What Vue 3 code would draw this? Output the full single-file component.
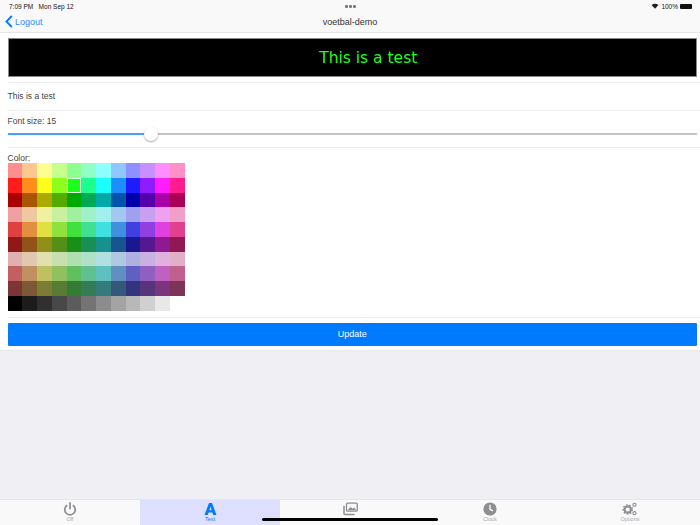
<script setup>
import { ref } from 'vue'

// hue order: [r, g, b] picks from max / min / mid of each tone row
const hues = [
  ['max', 'min', 'min'], ['max', 'mid', 'min'], ['max', 'max', 'min'], ['mid', 'max', 'min'],
  ['min', 'max', 'min'], ['min', 'max', 'mid'], ['min', 'max', 'max'], ['min', 'mid', 'max'],
  ['min', 'min', 'max'], ['mid', 'min', 'max'], ['max', 'min', 'max'], ['max', 'min', 'mid']
]
const tones = [
  [255, 143], [255, 28], [170, 0],
  [240, 160], [224, 64], [144, 24],
  [224, 176], [192, 96], [124, 52]
]
const grays = [0, 28, 48, 72, 92, 116, 140, 164, 184, 208, 232]

const colors = []
for (const [max, min] of tones) {
  const mid = Math.round((max + min) / 2)
  const v = { max, min, mid }
  for (const h of hues) {
    colors.push(`rgb(${v[h[0]]},${v[h[1]]},${v[h[2]]})`)
  }
}
for (const g of grays) colors.push(`rgb(${g},${g},${g})`)

const selected = ref(16)
const tabs = [
  { label: 'Off', icon: 'power' },
  { label: 'Text', icon: 'text' },
  { label: '', icon: 'images' },
  { label: 'Clock', icon: 'clock' },
  { label: 'Options', icon: 'gears' }
]
</script>

<template>
  <div class="screen">
    <header class="top">
      <div class="status">
        <span class="time">7:09 PM&nbsp;&nbsp; Mon Sep 12</span>
        <span class="dots"><i></i><i></i><i></i></span>
        <span class="right">
          <svg width="8" height="6" viewBox="0 0 10 8"><path d="M5 7.6 L0.4 2.6 C3 0.3 7 0.3 9.6 2.6 Z" fill="#222"/></svg>
          100%
          <span class="battery"></span>
        </span>
      </div>
      <div class="nav">
        <a class="back">
          <svg width="8" height="13" viewBox="0 0 8 13"><path d="M6.8 1 L1.4 6.5 L6.8 12" fill="none" stroke="#007aff" stroke-width="1.8"/></svg>
          Logout
        </a>
        <span class="title">voetbal-demo</span>
      </div>
    </header>

    <main class="content">
      <div class="preview-row">
        <div class="preview">This is a test</div>
      </div>
      <div class="row text-row">This is a test</div>
      <div class="row slider-row">
        <div class="label">Font size: 15</div>
        <div class="slider">
          <div class="fill"></div>
          <div class="thumb"></div>
        </div>
      </div>
      <div class="row color-row">
        <div class="label color-label">Color:</div>
        <div class="palette">
          <div
            v-for="(c, i) in colors"
            :key="i"
            class="swatch"
            :class="{ on: i === selected }"
            :style="{ background: c }"
          ></div>
        </div>
      </div>
      <div class="button-row">
        <button class="update">Update</button>
      </div>
    </main>

    <div class="spacer"></div>

    <nav class="tabs">
      <div v-for="t in tabs" :key="t.icon" class="tab" :class="{ active: t.icon === 'text' }">
        <svg v-if="t.icon === 'power'" width="14" height="14" viewBox="0 0 14 15">
          <path d="M4 3.4 A5.6 5.6 0 1 0 10 3.4" fill="none" stroke="#8e8e93" stroke-width="1.9"/>
          <path d="M7 1 V7" stroke="#8e8e93" stroke-width="1.9" stroke-linecap="round"/>
        </svg>
        <svg v-else-if="t.icon === 'text'" width="13" height="14" viewBox="0 0 13 14">
          <path d="M0.5 13 H3.8 L4.6 10.6 H8.4 L9.2 13 H12.5 L8 1 H5 Z M5.4 8.2 L6.5 4.6 L7.6 8.2 Z" fill="#007aff" fill-rule="evenodd"/>
        </svg>
        <svg v-else-if="t.icon === 'images'" width="15" height="14" viewBox="0 0 15 13">
          <rect x="3.5" y="0.7" width="10.8" height="8" rx="1" fill="none" stroke="#8e8e93" stroke-width="1.3"/>
          <path d="M4.5 7.8 L7.5 4.5 L9.5 6.3 L11 5 L13.5 7.8 Z" fill="#8e8e93"/>
          <path d="M1 3.2 V11 Q1 12 2 12 H11.5" fill="none" stroke="#8e8e93" stroke-width="1.5"/>
        </svg>
        <svg v-else-if="t.icon === 'clock'" width="14" height="14" viewBox="0 0 14 14">
          <circle cx="7" cy="7" r="6.6" fill="#8e8e93"/>
          <path d="M7 2.8 V7.4 L10 8.8" fill="none" stroke="#fff" stroke-width="1.3"/>
        </svg>
        <svg v-else width="16" height="14" viewBox="0 0 16 15">
          <circle cx="5.6" cy="8" r="3.4" fill="none" stroke="#8e8e93" stroke-width="2.4"/>
          <circle cx="5.6" cy="8" r="5" fill="none" stroke="#8e8e93" stroke-width="1.4" stroke-dasharray="1.8 1.7"/>
          <circle cx="12.8" cy="3" r="1.7" fill="none" stroke="#8e8e93" stroke-width="1.2"/>
          <circle cx="12.8" cy="12" r="1.7" fill="none" stroke="#8e8e93" stroke-width="1.2"/>
        </svg>
        <span class="tab-label">{{ t.label }}</span>
      </div>
      <div class="home-bar"></div>
    </nav>
  </div>
</template>

<style>
html, body { margin: 0; }
</style>

<style scoped>
.screen {
  width: 700px;
  height: 525px;
  display: flex;
  flex-direction: column;
  background: #efeff4;
  font-family: "Liberation Sans", Arial, sans-serif;
  overflow: hidden;
  color: #333;
}

.top {
  background: #f9f9f9;
  border-bottom: 1px solid #e6e6e6;
  height: 32px;
}

.status {
  height: 12px;
  padding: 0 8px 0 9px;
  display: flex;
  justify-content: space-between;
  align-items: center;
  font-size: 6.5px;
  color: #111;
  position: relative;
}

.dots {
  position: absolute;
  left: 345px;
  top: 5px;
  display: flex;
  gap: 1.5px;
}

.dots i {
  width: 2.5px;
  height: 2.5px;
  border-radius: 50%;
  background: #777;
}

.right {
  display: flex;
  align-items: center;
  gap: 2px;
}

.battery {
  width: 12px;
  height: 5px;
  background: #111;
  border-radius: 1px;
}

.nav {
  height: 19px;
  display: flex;
  align-items: center;
  position: relative;
}

.back {
  display: flex;
  align-items: center;
  gap: 2px;
  padding-left: 5px;
  color: #2a8cff;
  font-size: 9px;
}

.title {
  position: absolute;
  left: 0;
  right: 0;
  text-align: center;
  font-size: 9px;
  color: #333;
}

.content {
  background: #fff;
  padding-left: 7.5px;
  height: 318px;
  border-bottom: 1px solid #e8e8ec;
  box-sizing: border-box;
}

.preview-row {
  padding: 5px 3px 5px 0;
  border-bottom: 1px solid #eee;
}

.preview {
  height: 39px;
  box-sizing: border-box;
  background: #000;
  border: 1px solid #888;
  color: #1cff1c;
  font-family: "DejaVu Sans", sans-serif;
  font-size: 15.5px;
  line-height: 38px;
  text-align: center;
  padding-left: 32px;
}

.row {
  border-bottom: 1px solid #eee;
}

.text-row {
  height: 27px;
  line-height: 27px;
  font-size: 8.5px;
  color: #444;
}

.slider-row {
  height: 37px;
  box-sizing: border-box;
  padding-top: 5px;
}

.label {
  font-size: 8.5px;
  line-height: 10px;
  color: #444;
}

.slider {
  position: relative;
  height: 2px;
  margin-top: 7px;
  margin-right: 3px;
  background: #c4c4c8;
}

.fill {
  width: 144px;
  height: 2px;
  background: #4a9dff;
}

.thumb {
  position: absolute;
  left: 136.5px;
  top: -6px;
  width: 14px;
  height: 14px;
  border-radius: 50%;
  background: #fff;
  box-shadow: 0 1px 2px rgba(0, 0, 0, 0.35);
}

.color-row {
  height: 170px;
  box-sizing: border-box;
  padding-top: 6px;
}

.color-label {
  line-height: 9px;
}

.palette {
  width: 177px;
  display: grid;
  grid-template-columns: repeat(12, 14.75px);
  grid-auto-rows: 14.75px;
}

.swatch {
  box-sizing: border-box;
}

.swatch.on {
  border: 1px solid #e0ffe0;
}

.button-row {
  padding: 5px 3px 0 0;
}

.update {
  display: block;
  width: 100%;
  height: 22.5px;
  border: 0;
  padding: 0;
  border-radius: 1px;
  background: #007aff;
  color: #fff;
  font-family: inherit;
  font-size: 9px;
}

.spacer {
  flex: 1;
}

.tabs {
  height: 26px;
  position: relative;
  background: #f9f9f9;
  border-top: 1px solid #e6e6e6;
  box-sizing: border-box;
  display: grid;
  grid-template-columns: repeat(5, 140px);
}

.tab {
  display: flex;
  flex-direction: column;
  align-items: center;
  padding-top: 2px;
  color: #aaa;
}

.tab svg {
  display: block;
}

.tab.active {
  background: #dfe0ff;
  color: #007aff;
}

.tab-label {
  font-size: 5.5px;
  line-height: 6px;
  margin-top: 0;
}

.home-bar {
  position: absolute;
  left: 262px;
  top: 18px;
  width: 176px;
  height: 3px;
  border-radius: 2px;
  background: #000;
}
</style>
